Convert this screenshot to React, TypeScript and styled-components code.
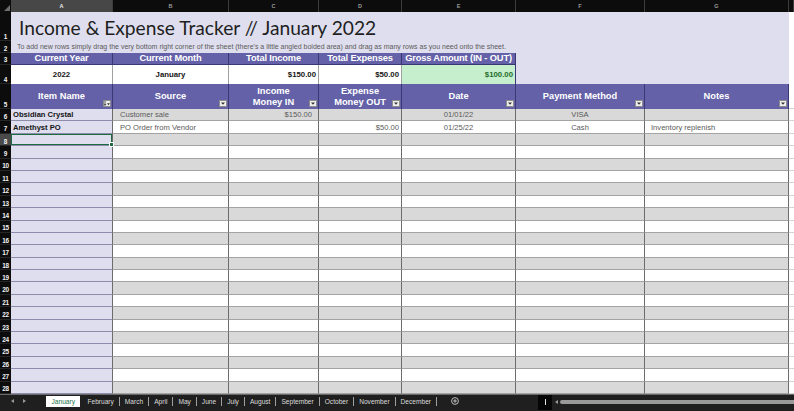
import React from 'react';
import styled, { createGlobalStyle } from 'styled-components';

const LAV = '#dfdeee';
const PURPLE = '#6461a8';
const COLS = '11px 102px 116px 90px 83px 114px 129px 144px 1fr';

const GlobalStyle = createGlobalStyle`
  html, body { margin: 0; padding: 0; background: #ffffff; overflow: hidden; }
  body { font-family: "Liberation Sans", Arial, sans-serif; }
`;

const Window = styled.div`
  width: 794px;
  height: 411px;
  display: flex;
  flex-direction: column;
  overflow: hidden;
  background: #ffffff;
`;

const ColumnBar = styled.div`
  display: grid;
  grid-template-columns: ${COLS};
  height: 12px;
  flex: none;
  background: #0c0c0c;
`;

const Corner = styled.div`
  position: relative;
  background: #0c0c0c;
  &::after {
    content: '';
    position: absolute;
    right: 1px;
    bottom: 1px;
    border-style: solid;
    border-width: 0 0 6px 6px;
    border-color: transparent transparent #6d6d6d transparent;
  }
`;

const ColLetter = styled.div<{ $active?: boolean }>`
  display: flex;
  align-items: center;
  justify-content: center;
  font-size: 5.5px;
  font-weight: 700;
  color: ${p => (p.$active ? '#e8e8e8' : '#9a9a9a')};
  background: ${p => (p.$active ? '#474747' : '#0c0c0c')};
  border-right: 1px solid #3c3c3c;
  box-sizing: border-box;
`;

const Row = styled.div<{ $h: number }>`
  display: grid;
  grid-template-columns: ${COLS};
  height: ${p => p.$h}px;
  flex: none;
`;

const RowNum = styled.div<{ $active?: boolean }>`
  display: flex;
  align-items: flex-end;
  justify-content: center;
  padding-bottom: 0.5px;
  box-sizing: border-box;
  background: ${p => (p.$active ? '#4a4a4a' : '#0c0c0c')};
  color: #f2f2f2;
  font-size: 6.4px;
  font-weight: 700;
  letter-spacing: -0.2px;
  border-bottom: 1px solid #262626;
`;

const Band = styled.div<{ $from: number; $to: number }>`
  grid-column: ${p => p.$from} / ${p => p.$to};
  background: ${LAV};
  display: flex;
  align-items: flex-end;
  overflow: hidden;
  white-space: nowrap;
`;

const Title = styled.h1`
  margin: 0 0 4px 8px;
  font-family: "Lato", "Liberation Sans", sans-serif;
  font-weight: 400;
  font-size: 19.2px;
  line-height: 19px;
  color: #1e1e1e;
`;

const Hint = styled.p`
  margin: 0 0 2px 6px;
  font-size: 7px;
  line-height: 8px;
  color: #5a5a5a;
`;

const Blank = styled.div<{ $line?: boolean }>`
  background: #ffffff;
  border-bottom: ${p => (p.$line ? '1px solid #d4d4d4' : 'none')};
  box-sizing: border-box;
`;

const SumHead = styled.div`
  background: ${PURPLE};
  color: #ffffff;
  font-size: 9.3px;
  font-weight: 700;
  display: flex;
  align-items: center;
  justify-content: center;
  white-space: nowrap;
  overflow: hidden;
  border-right: 1px solid #3b3975;
  border-bottom: 1px solid #3b3975;
  box-sizing: border-box;
  letter-spacing: -0.15px;
`;

const SumValue = styled.div<{ $align: 'center' | 'flex-end'; $green?: boolean }>`
  background: ${p => (p.$green ? '#c6efce' : '#ffffff')};
  color: ${p => (p.$green ? '#1f6b2a' : '#151515')};
  font-size: 7.8px;
  font-weight: 700;
  display: flex;
  align-items: center;
  justify-content: ${p => p.$align};
  padding: 0 2px;
  border-right: 1px solid ${p => (p.$green ? '#3b3975' : '#a0a0a0')};
  box-sizing: border-box;
`;

const ColHead = styled.div`
  position: relative;
  background: ${PURPLE};
  color: #ffffff;
  font-size: 9.3px;
  line-height: 11px;
  font-weight: 700;
  text-align: center;
  display: flex;
  align-items: center;
  justify-content: center;
  border-right: 1px solid #3b3975;
  box-sizing: border-box;
`;

const FilterButton = styled.span`
  position: absolute;
  right: 1px;
  bottom: 2px;
  width: 8px;
  height: 7px;
  background: #eeeeee;
  border: 1px solid #8c8c8c;
  box-sizing: border-box;
  display: flex;
  align-items: center;
  justify-content: center;
`;

type Tone = 'lav' | 'gray' | 'white';

const Cell = styled.div<{ $tone: Tone; $align?: string; $bold?: boolean; $pad?: number; $selected?: boolean }>`
  position: relative;
  background: ${p => (p.$tone === 'lav' ? LAV : p.$tone === 'gray' ? '#d9d9d9' : '#ffffff')};
  border-right: 1px solid #6c6c6c;
  border-bottom: 1px solid ${p => (p.$tone === 'lav' ? '#8e8cab' : '#a3a3a3')};
  box-sizing: border-box;
  display: flex;
  align-items: center;
  justify-content: ${p => p.$align ?? 'flex-start'};
  padding: 0 ${p => p.$pad ?? 2}px;
  font-size: 7.6px;
  font-weight: ${p => (p.$bold ? 700 : 400)};
  color: ${p => (p.$bold ? '#141414' : '#5a5a5a')};
  white-space: nowrap;
  overflow: visible;
  box-shadow: ${p => (p.$selected ? 'inset 0 0 0 1px #1d6b40' : 'none')};
  &::after {
    content: '';
    display: ${p => (p.$selected ? 'block' : 'none')};
    position: absolute;
    right: -2px;
    bottom: -2px;
    width: 3px;
    height: 3px;
    background: #1d6b40;
    border: 1px solid #ffffff;
    z-index: 2;
  }
`;

const TabBar = styled.div`
  flex: 1;
  display: flex;
  align-items: flex-start;
  background: #1f1f1f;
  border-top: 1px solid #6a6a6a;
  padding-top: 1px;
`;

const Nav = styled.div`
  width: 46px;
  flex: none;
  display: flex;
  align-items: center;
  gap: 9px;
  padding-left: 11px;
  height: 11px;
  box-sizing: border-box;
`;

const Arrow = styled.span<{ $dir: 'left' | 'right' }>`
  width: 0;
  height: 0;
  border-top: 2px solid transparent;
  border-bottom: 2px solid transparent;
  ${p => (p.$dir === 'left' ? 'border-right: 3px solid #9a9a9a;' : 'border-left: 3px solid #9a9a9a;')}
`;

const Tab = styled.div<{ $active?: boolean }>`
  height: 11px;
  display: flex;
  align-items: center;
  padding: 0 ${p => (p.$active ? 5.5 : 5)}px;
  margin-right: ${p => (p.$active ? 2 : 0)}px;
  font-size: 6.6px;
  color: ${p => (p.$active ? '#217346' : '#dcdcdc')};
  background: ${p => (p.$active ? '#ffffff' : 'transparent')};
  box-sizing: border-box;
`;

const Sep = styled.span`
  width: 1px;
  height: 9px;
  margin-top: 1px;
  background: #a0a0a0;
`;

const AddSheet = styled.div`
  margin-left: 14px;
  height: 11px;
  display: flex;
  align-items: center;
`;

const Scroll = styled.div`
  margin-left: auto;
  width: 256px;
  height: 100%;
  display: flex;
  align-items: center;
  margin-top: -1px;
`;

const Splitter = styled.div`
  width: 14px;
  height: 100%;
  background: #050505;
  display: flex;
  align-items: center;
  justify-content: center;
  &::after {
    content: '';
    width: 1px;
    height: 6px;
    background: #e0e0e0;
  }
`;

const Track = styled.div`
  flex: 1;
  display: flex;
  align-items: center;
  gap: 2px;
  padding-left: 3px;
`;

const Thumb = styled.div`
  flex: 1;
  height: 4px;
  border-radius: 2px 0 0 2px;
  background: #9a9a9a;
`;

const SHEETS = ['January', 'February', 'March', 'April', 'May', 'June', 'July', 'August', 'September', 'October', 'November', 'December'];

type Align = 'flex-start' | 'center' | 'flex-end';
const COLSPEC: { align: Align; pad: number; bold?: boolean }[] = [
  { align: 'flex-start', pad: 2, bold: true },
  { align: 'flex-start', pad: 7 },
  { align: 'flex-end', pad: 6 },
  { align: 'flex-end', pad: 2 },
  { align: 'center', pad: 2 },
  { align: 'center', pad: 2 },
  { align: 'flex-start', pad: 6 },
];

const DATA: string[][] = [
  ['Obsidian Crystal', 'Customer sale', '$150.00', '', '01/01/22', 'VISA', ''],
  ['Amethyst PO', 'PO Order from Vendor', '', '$50.00', '01/25/22', 'Cash', 'Inventory replenish'],
];

const HEADERS: React.ReactNode[] = [
  'Item Name',
  'Source',
  <>Income<br />Money IN</>,
  <>Expense<br />Money OUT</>,
  'Date',
  'Payment Method',
  'Notes',
];

function Caret() {
  return (
    <svg width="4" height="3" viewBox="0 0 4 3">
      <path d="M0 0.5 L4 0.5 L2 2.8 Z" fill="#333" />
    </svg>
  );
}

function SortCaret() {
  return (
    <svg width="6" height="5" viewBox="0 0 6 5">
      <path d="M1 0 V4 M0 3 L1 4.5 L2 3" stroke="#333" strokeWidth="0.8" fill="none" />
      <path d="M3 2.2 L6 2.2 L4.5 4.2 Z" fill="#333" />
    </svg>
  );
}

export default function App() {
  const emptyRows = Array.from({ length: 21 }, () => ['', '', '', '', '', '', '']);
  const rows = [...DATA, ...emptyRows];

  return (
    <Window>
      <GlobalStyle />
      <ColumnBar>
        <Corner />
        {['A', 'B', 'C', 'D', 'E', 'F', 'G'].map(l => (
          <ColLetter key={l} $active={l === 'A'}>{l}</ColLetter>
        ))}
        <ColLetter />
      </ColumnBar>

      <Row $h={29}>
        <RowNum>1</RowNum>
        <Band $from={2} $to={9}>
          <Title>Income &amp; Expense Tracker // January 2022</Title>
        </Band>
        <Blank />
      </Row>
      <Row $h={12}>
        <RowNum>2</RowNum>
        <Band $from={2} $to={9}>
          <Hint>
            To add new rows simply drag the very bottom right corner of the sheet (there's a little angled bolded area) and drag as many rows as you need onto the sheet.
          </Hint>
        </Band>
        <Blank />
      </Row>
      <Row $h={11.5}>
        <RowNum>3</RowNum>
        <SumHead>Current Year</SumHead>
        <SumHead>Current Month</SumHead>
        <SumHead>Total Income</SumHead>
        <SumHead>Total Expenses</SumHead>
        <SumHead>Gross Amount (IN - OUT)</SumHead>
        <Band $from={7} $to={9} />
        <Blank />
      </Row>
      <Row $h={19.5}>
        <RowNum>4</RowNum>
        <SumValue $align="center">2022</SumValue>
        <SumValue $align="center">January</SumValue>
        <SumValue $align="flex-end">$150.00</SumValue>
        <SumValue $align="flex-end">$50.00</SumValue>
        <SumValue $align="flex-end" $green>$100.00</SumValue>
        <Band $from={7} $to={9} />
        <Blank />
      </Row>
      <Row $h={25}>
        <RowNum>5</RowNum>
        {HEADERS.map((h, i) => (
          <ColHead key={i}>
            <span>{h}</span>
            <FilterButton>{i === 0 ? <SortCaret /> : <Caret />}</FilterButton>
          </ColHead>
        ))}
        <Blank $line />
      </Row>

      {rows.map((r, i) => {
        const n = i + 6;
        const tone: Tone = n % 2 === 0 ? 'gray' : 'white';
        return (
          <Row $h={12.4} key={n}>
            <RowNum $active={n === 8}>{n}</RowNum>
            {r.map((v, c) => (
              <Cell
                key={c}
                $tone={c === 0 ? 'lav' : tone}
                $align={COLSPEC[c].align}
                $pad={COLSPEC[c].pad}
                $bold={COLSPEC[c].bold}
                $selected={n === 8 && c === 0}
              >
                {v}
              </Cell>
            ))}
            <Blank $line />
          </Row>
        );
      })}

      <TabBar>
        <Nav>
          <Arrow $dir="left" />
          <Arrow $dir="right" />
        </Nav>
        {SHEETS.map((s, i) => (
          <React.Fragment key={s}>
            {i > 1 && <Sep />}
            <Tab $active={i === 0}>{s}</Tab>
          </React.Fragment>
        ))}
        <Sep />
        <AddSheet>
          <svg width="8" height="8" viewBox="0 0 8 8">
            <circle cx="4" cy="4" r="3.4" fill="none" stroke="#cfcfcf" strokeWidth="0.9" />
            <path d="M4 2.2 V5.8 M2.2 4 H5.8" stroke="#cfcfcf" strokeWidth="0.9" />
          </svg>
        </AddSheet>
        <Scroll>
          <Splitter />
          <Track>
            <Arrow $dir="left" />
            <Thumb />
          </Track>
        </Scroll>
      </TabBar>
    </Window>
  );
}
